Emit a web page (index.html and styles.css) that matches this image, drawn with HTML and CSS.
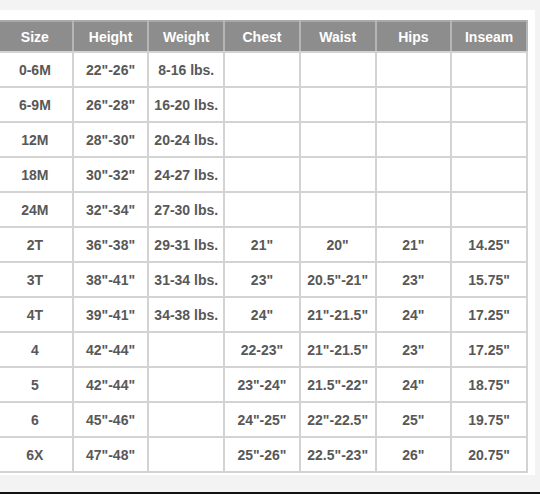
FILE: index.html
```html
<!DOCTYPE html>
<html>
<head>
<meta charset="utf-8">
<link rel="stylesheet" href="styles.css">
</head>
<body>
<div class="page">
  <div class="sheet">
    <table class="sizes">
      <thead>
        <tr><th>Size</th><th>Height</th><th>Weight</th><th>Chest</th><th>Waist</th><th>Hips</th><th>Inseam</th></tr>
      </thead>
      <tbody>
        <tr><td>0-6M</td><td>22"-26"</td><td>8-16 lbs.</td><td></td><td></td><td></td><td></td></tr>
        <tr><td>6-9M</td><td>26"-28"</td><td>16-20 lbs.</td><td></td><td></td><td></td><td></td></tr>
        <tr><td>12M</td><td>28"-30"</td><td>20-24 lbs.</td><td></td><td></td><td></td><td></td></tr>
        <tr><td>18M</td><td>30"-32"</td><td>24-27 lbs.</td><td></td><td></td><td></td><td></td></tr>
        <tr><td>24M</td><td>32"-34"</td><td>27-30 lbs.</td><td></td><td></td><td></td><td></td></tr>
        <tr><td>2T</td><td>36"-38"</td><td>29-31 lbs.</td><td>21"</td><td>20"</td><td>21"</td><td>14.25"</td></tr>
        <tr><td>3T</td><td>38"-41"</td><td>31-34 lbs.</td><td>23"</td><td>20.5"-21"</td><td>23"</td><td>15.75"</td></tr>
        <tr><td>4T</td><td>39"-41"</td><td>34-38 lbs.</td><td>24"</td><td>21"-21.5"</td><td>24"</td><td>17.25"</td></tr>
        <tr><td>4</td><td>42"-44"</td><td></td><td>22-23"</td><td>21"-21.5"</td><td>23"</td><td>17.25"</td></tr>
        <tr><td>5</td><td>42"-44"</td><td></td><td>23"-24"</td><td>21.5"-22"</td><td>24"</td><td>18.75"</td></tr>
        <tr><td>6</td><td>45"-46"</td><td></td><td>24"-25"</td><td>22"-22.5"</td><td>25"</td><td>19.75"</td></tr>
        <tr><td>6X</td><td>47"-48"</td><td></td><td>25"-26"</td><td>22.5"-23"</td><td>26"</td><td>20.75"</td></tr>
      </tbody>
    </table>
  </div>
  <div class="bottom-bar"></div>
</div>
</body>
</html>
```

FILE: styles.css
```css
html, body {
  margin: 0;
  padding: 0;
}
body {
  background: #f3f3f3;
  width: 540px;
  height: 494px;
  overflow: hidden;
  font-family: "Liberation Sans", Arial, sans-serif;
}
.page {
  display: flex;
  flex-direction: column;
  height: 494px;
}
.sheet {
  margin-top: 10px;
  width: 535px;
  height: 465px;
  background: #ffffff;
  padding-top: 10px;
  box-sizing: border-box;
  overflow: hidden;
}
.sizes {
  border-collapse: collapse;
  table-layout: fixed;
  width: 532px;
  margin-left: -4px;
  font-size: 14px;
  font-weight: bold;
  color: #585858;
}
.sizes th,
.sizes td {
  padding: 0;
  text-align: center;
  vertical-align: middle;
  border: 2px solid #d3d3d3;
  white-space: nowrap;
}
.sizes thead tr {
  height: 31px;
}
.sizes th {
  background: #8d8d8d;
  color: #ffffff;
  border-top-color: #a9a9a9;
  border-left-color: #b5b5b5;
  border-right-color: #b5b5b5;
}
.sizes tbody tr {
  height: 35px;
}
.bottom-bar {
  margin-top: auto;
  height: 2px;
  background: #111111;
}
```
